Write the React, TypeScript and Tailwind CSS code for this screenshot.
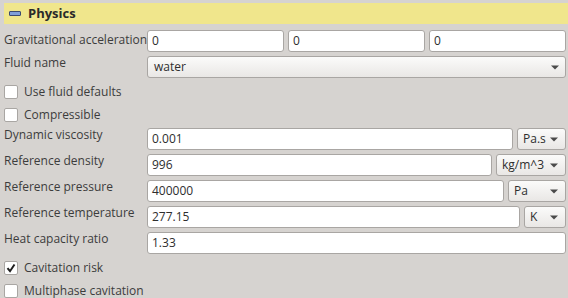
import React from "react";

const Arrow = () => (
  <svg width="8" height="5" viewBox="0 0 8 5" className="shrink-0">
    <path d="M0 0.5 L8 0.5 L4 4.5 Z" fill="#4a4a4a" />
  </svg>
);

const Input = ({ value, className = "" }: { value: string; className?: string }) => (
  <div
    className={
      "h-[22px] bg-white border border-[#a9a6a3] rounded-[3px] flex items-center pl-[4px] text-[#2e2e2e] " +
      className
    }
  >
    {value}
  </div>
);

const Combo = ({ value, className = "" }: { value: string; className?: string }) => (
  <div
    className={
      "h-[22px] border border-[#a9a6a3] rounded-[3px] flex items-center justify-between pl-[5px] pr-[7px] bg-gradient-to-b from-[#fbfbfa] to-[#e9e7e5] text-[#2e2e2e] shrink-0 " +
      className
    }
  >
    <span>{value}</span>
    <Arrow />
  </div>
);

const Check = ({ label, checked = false }: { label: string; checked?: boolean }) => (
  <div className="h-[23px] flex items-center pl-[4px] gap-[6px]">
    <div className="w-[14px] h-[14px] bg-white border border-[#a9a6a3] rounded-[2px] flex items-center justify-center">
      {checked && (
        <svg width="10" height="10" viewBox="0 0 10 10">
          <path d="M1.5 5.2 L4 8.2 L8.5 1.5" stroke="#1e1e1e" strokeWidth="2" fill="none" />
        </svg>
      )}
    </div>
    <span>{label}</span>
  </div>
);

const Row = ({
  label,
  children,
  labelClass = "-mt-[4px]",
}: {
  label: string;
  children: React.ReactNode;
  labelClass?: string;
}) => (
  <div className="flex h-[22px]">
    <div className={"w-[147px] pl-[4px] leading-[22px] shrink-0 whitespace-nowrap " + labelClass}>{label}</div>
    <div className="flex-1 flex gap-[4px] min-w-0">{children}</div>
  </div>
);

export default function App() {
  return (
    <div
      className="w-[568px] h-[298px] overflow-hidden bg-[#d6d3d0] text-[12px] text-[#3c3c3c]"
      style={{ fontFamily: '"Open Sans", "Noto Sans", sans-serif' }}
    >
      <div className="pt-[3px] pl-[4px]">
        <div className="h-[21px] bg-[#f0e68c] flex items-center pl-[5px] gap-[7px]">
          <div className="w-[12px] h-[5px] bg-[#7f9fd8] border border-[#3a4a70] rounded-[1px]" />
          <span className="font-bold text-[#2a2a2a] text-[13px]">Physics</span>
        </div>
      </div>
      <div className="pr-[2px] flex flex-col">
        <div className="flex flex-col gap-[4px] pt-[6px]">
          <Row label="Gravitational acceleration" labelClass="-mt-[1px]">
            <Input value="0" className="flex-1" />
            <Input value="0" className="flex-1" />
            <Input value="0" className="flex-1" />
          </Row>
          <Row label="Fluid name">
            <Combo value="water" className="flex-1 !pl-[6px] !pr-[6px]" />
          </Row>
        </div>
        <div className="pt-[2px]">
          <Check label="Use fluid defaults" />
          <Check label="Compressible" />
        </div>
        <div className="flex flex-col gap-[4px] pt-[2px]">
          <Row label="Dynamic viscosity">
            <Input value="0.001" className="flex-1" />
            <Combo value="Pa.s" className="w-[49px]" />
          </Row>
          <Row label="Reference density">
            <Input value="996" className="flex-1" />
            <Combo value="kg/m^3" className="w-[70px]" />
          </Row>
          <Row label="Reference pressure">
            <Input value="400000" className="flex-1" />
            <Combo value="Pa" className="w-[58px]" />
          </Row>
          <Row label="Reference temperature">
            <Input value="277.15" className="flex-1" />
            <Combo value="K" className="w-[42px]" />
          </Row>
          <Row label="Heat capacity ratio">
            <Input value="1.33" className="flex-1" />
          </Row>
        </div>
        <div className="pt-[2px]">
          <Check label="Cavitation risk" checked />
          <Check label="Multiphase cavitation" />
        </div>
      </div>
    </div>
  );
}
